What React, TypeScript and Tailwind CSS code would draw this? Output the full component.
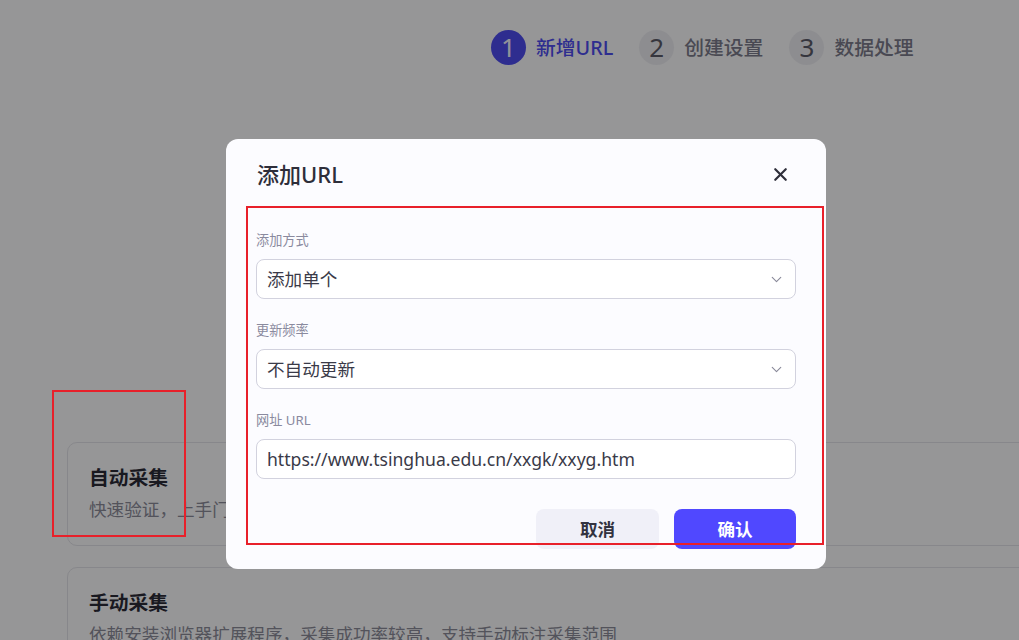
import { X, ChevronDown } from "lucide-react";

const font = { fontFamily: '"Noto Sans", "Noto Sans CJK SC", sans-serif' };

function Step({ n, label, active }: { n: number; label: string; active?: boolean }) {
  return (
    <div className="flex items-center gap-[10px]">
      <div
        className={
          active
            ? "flex h-[35px] w-[35px] items-center justify-center rounded-full bg-[#4d4cee] text-[26px] text-[#f4f4ff]"
            : "flex h-[35px] w-[35px] items-center justify-center rounded-full bg-[#ececf1] text-[26px] text-[#5a5a68]"
        }
      >
        {n}
      </div>
      <span className={active ? "text-[19.8px] font-medium text-[#4d4cee]" : "text-[19.8px] font-medium text-[#7a7a8a]"}>
        {label}
      </span>
    </div>
  );
}

function Field({ label, children }: { label: string; children: React.ReactNode }) {
  return (
    <div>
      <div className="mb-[9px] text-[13.2px] leading-[20px] text-[#8a8a9e]">{label}</div>
      {children}
    </div>
  );
}

function SelectBox({ value }: { value: string }) {
  return (
    <div className="flex h-[40px] items-center justify-between rounded-[8px] border border-[#d2d2de] bg-white pl-[10px] pr-[10px] text-[17.6px] text-[#3a3a48]">
      <span>{value}</span>
      <ChevronDown className="h-[17px] w-[17px] text-[#8a8a9a]" strokeWidth={1.6} />
    </div>
  );
}

export default function App() {
  return (
    <div style={font} className="relative h-[640px] w-full overflow-hidden bg-[#fafafc]">
      <div className="flex gap-[26px] pl-[491px] pt-[30px]">
        <Step n={1} label="新增URL" active />
        <Step n={2} label="创建设置" />
        <Step n={3} label="数据处理" />
      </div>

      <div className="ml-[67px] mt-[377px] flex w-[1100px] flex-col gap-[21px]">
        <div className="h-[104px] rounded-[10px] border border-[#e2e2e8] px-[21px] pt-[20px]">
          <div className="text-[19.8px] font-bold leading-[30px] text-[#2a2a36]">自动采集</div>
          <div className="mt-[3px] text-[17.6px] text-[#8a8a98]">快速验证，上手门槛低，适用于大部分公开网页</div>
        </div>
        <div className="h-[104px] rounded-[10px] border border-[#e2e2e8] px-[21px] pt-[20px]">
          <div className="text-[19.8px] font-bold leading-[30px] text-[#2a2a36]">手动采集</div>
          <div className="mt-[3px] text-[17.6px] text-[#8a8a98]">依赖安装浏览器扩展程序，采集成功率较高，支持手动标注采集范围</div>
        </div>
      </div>

      <div className="absolute inset-0 bg-black/40" />

      <div className="absolute left-[226px] top-[139px] w-[600px] rounded-[12px] bg-[#fcfcff] px-[30px] pb-[20px] pt-[21px]">
        <div className="flex h-[28px] items-center justify-between">
          <span className="pl-[1px] text-[22px] font-medium text-[#2e2e3a]">添加URL</span>
          <X className="mr-[5px] h-[21px] w-[21px] text-[#2e2e3a]" strokeWidth={2.5} />
        </div>
        <div className="mt-[42px] flex flex-col gap-[21px]">
          <Field label="添加方式">
            <SelectBox value="添加单个" />
          </Field>
          <Field label="更新频率">
            <SelectBox value="不自动更新" />
          </Field>
          <Field label="网址 URL">
            <div className="flex h-[40px] items-center rounded-[8px] border border-[#d2d2de] bg-white px-[10px] text-[17.6px] text-[#3a3a48]">
              https://www.tsinghua.edu.cn/xxgk/xxyg.htm
            </div>
          </Field>
        </div>
        <div className="mt-[30px] flex justify-end gap-[15px]">
          <button className="h-[40px] w-[123px] rounded-[8px] bg-[#f0f0f8] text-[17.6px] font-bold text-[#33333f]">取消</button>
          <button className="h-[40px] w-[122px] rounded-[8px] bg-[#5048ff] text-[17.6px] font-bold text-white">确认</button>
        </div>
      </div>

      <div className="absolute left-[52px] top-[390px] h-[147px] w-[134px] border-2 border-[#e8202a]" />
      <div className="absolute left-[246px] top-[206px] h-[339px] w-[578px] border-2 border-[#e8202a]" />
    </div>
  );
}
